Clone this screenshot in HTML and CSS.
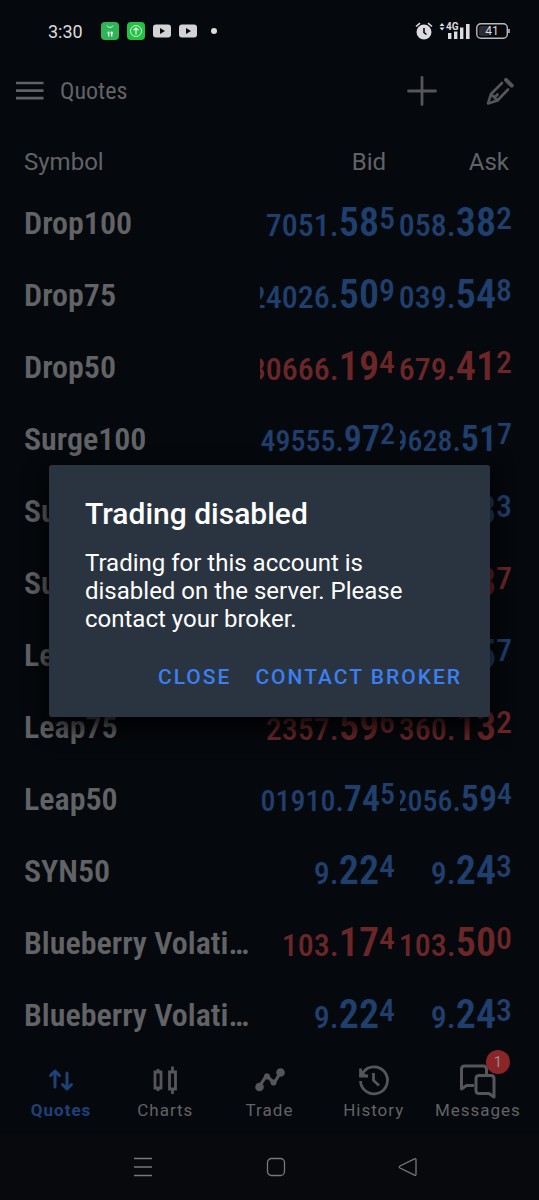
FILE: index.html
```html
<!DOCTYPE html>
<html lang="en">
<head>
<meta charset="utf-8">
<meta name="viewport" content="width=device-width, initial-scale=1">
<title>Quotes</title>
<link rel="stylesheet" href="styles.css">
</head>
<body>
<div class="app">
  <div class="status">
    <span class="clock">3:30</span>
    <div class="notices">
      <svg width="18" height="18" viewBox="0 0 18 18"><rect width="18" height="18" rx="4" fill="#2fb457"/><path d="M6 3.500a3.200 3 0 0 0 6 0" fill="none" stroke="#c9f5d2" stroke-width="1"/><path d="M7.700 9.500v5M10.700 9.500v5M6.500 11h2M9.500 11h2.500" stroke="#e6fbe9" stroke-width="1.300"/></svg>
      <svg width="18" height="18" viewBox="0 0 18 18"><rect width="18" height="18" rx="4" fill="#25c045"/><circle cx="9" cy="9" r="5.500" fill="none" stroke="#c9f5d2"/><path d="M9 12.500V6M6.500 8.300 9 5.800l2.500 2.500" fill="none" stroke="#e6fbe9" stroke-width="1.200"/></svg>
      <svg width="18" height="18" viewBox="0 0 18 18"><rect y="2.500" width="18" height="13" rx="3" fill="#d3d3d5"/><path d="M7 6v6l5-3z" fill="#08090c"/></svg>
      <svg width="18" height="18" viewBox="0 0 18 18"><rect y="2.500" width="18" height="13" rx="3" fill="#d3d3d5"/><path d="M7 6v6l5-3z" fill="#08090c"/></svg>
      <svg class="dot" width="6" height="6" viewBox="0 0 6 6"><circle cx="3" cy="3" r="3" fill="#dcdcde"/></svg>
    </div>
    <div class="system">
      <svg width="18" height="18" viewBox="0 0 18 18"><circle cx="9" cy="10" r="7.500" fill="#dcdcde"/><path d="M1 4.500 5 1.200M17 4.500l-4-3.300" stroke="#dcdcde" stroke-width="1.600"/><path d="M9 6v4.500l2.500 2" fill="none" stroke="#08090c" stroke-width="1.600"/></svg>
      <svg class="signal" width="31" height="18" viewBox="0 0 31 18" fill="#dcdcde"><path d="M.5 4 3 1l2.500 3zM.5 5.500 3 8.500l2.500-3zM9 11h3.400v6H9zM15 9.500h3.400V17H15zM21 5.500h3.400V17H21zM27 2h3.600v15H27z"/><text class="signal-text" x="7" y="8">4G</text></svg>
      <svg width="34" height="18" viewBox="0 0 34 18"><rect x=".8" y="1.800" width="30.500" height="14.500" rx="4" fill="none" stroke="#b9babc" stroke-width="1.400"/><rect x="3" y="4" width="10" height="10" rx="2" fill="#2a2c30"/><path d="M33 7v4" stroke="#b9babc" stroke-width="1.600"/><text class="battery-text" x="16" y="13" text-anchor="middle">41</text></svg>
    </div>
  </div>

  <header class="toolbar">
    <button class="icon-button" aria-label="Menu"><svg width="28" height="20" viewBox="0 0 28 20"><path d="M0 2h27.500M0 9.700h27.500M0 17.200h27.500" stroke="#626366" stroke-width="2.700"/></svg></button>
    <h1 class="title">Quotes</h1>
    <button class="icon-button add" aria-label="Add symbol"><svg width="30" height="30" viewBox="0 0 30 30"><path d="M15 1.500v27M1.500 15h27" stroke="#55565a" stroke-width="2.800" stroke-linecap="round"/></svg></button>
    <button class="icon-button" aria-label="Edit list"><svg width="28" height="28" viewBox="0 0 28 28" fill="none" stroke="#55565a" stroke-width="2.600" stroke-linejoin="round" stroke-linecap="round"><path d="M16 6 5 17 2 26.500l9.500-3L22 12.500M5 17l6.500 6.500M8.500 20.500l3-3"/><path d="m20 2.800 5.800 5.800" stroke-width="4"/></svg></button>
  </header>

  <table class="quotes">
    <thead>
      <tr><th class="col-symbol">Symbol</th><th class="col-bid">Bid</th><th class="col-ask">Ask</th></tr>
    </thead>
    <tbody>
      <tr><td class="name">Drop100</td><td><div class="price up">7051.<b>58</b><i>5</i></div></td><td><div class="price up">7058.<b>38</b><i>2</i></div></td></tr>
      <tr><td class="name">Drop75</td><td><div class="price up">24026.<b>50</b><i>9</i></div></td><td><div class="price up">24039.<b>54</b><i>8</i></div></td></tr>
      <tr><td class="name">Drop50</td><td><div class="price down">30666.<b>19</b><i>4</i></div></td><td><div class="price down">30679.<b>41</b><i>2</i></div></td></tr>
      <tr><td class="name">Surge100</td><td><div class="price up small">49555.<b>97</b><i>2</i></div></td><td><div class="price up small">49628.<b>51</b><i>7</i></div></td></tr>
      <tr><td class="name">Surge75</td><td><div class="price up"></div></td><td><div class="price up"><b>33</b><i>3</i></div></td></tr>
      <tr><td class="name">Surge50</td><td><div class="price down"></div></td><td><div class="price down"><b>33</b><i>7</i></div></td></tr>
      <tr><td class="name">Leap100</td><td><div class="price up"></div></td><td><div class="price up"><b>55</b><i>7</i></div></td></tr>
      <tr><td class="name">Leap75</td><td><div class="price down">2357.<b>59</b><i>6</i></div></td><td><div class="price down">2360.<b>13</b><i>2</i></div></td></tr>
      <tr><td class="name">Leap50</td><td><div class="price up small">301910.<b>74</b><i>5</i></div></td><td><div class="price up small">302056.<b>59</b><i>4</i></div></td></tr>
      <tr><td class="name">SYN50</td><td><div class="price up">9.<b>22</b><i>4</i></div></td><td><div class="price up">9.<b>24</b><i>3</i></div></td></tr>
      <tr><td class="name">Blueberry Volati…</td><td><div class="price down">103.<b>17</b><i>4</i></div></td><td><div class="price down">103.<b>50</b><i>0</i></div></td></tr>
      <tr><td class="name">Blueberry Volati…</td><td><div class="price up">9.<b>22</b><i>4</i></div></td><td><div class="price up">9.<b>24</b><i>3</i></div></td></tr>
    </tbody>
  </table>

  <nav class="tabs">
    <a class="tab active" href="#quotes"><svg width="36" height="36" viewBox="0 0 36 36" fill="none" stroke="#1d4178" stroke-width="3" stroke-linecap="round" stroke-linejoin="round"><path d="M12 25V9M7.500 13.500 12 9l4.500 4.500M24 11v16M19.500 22.500 24 27l4.500-4.500"/></svg>Quotes</a>
    <a class="tab" href="#charts"><svg width="36" height="36" viewBox="0 0 36 36" fill="none" stroke="#55565a" stroke-width="2.800"><path d="M8 10h6v16H8zM22.500 10h6v17h-6zM11 7v3M11 26v3M25.500 4.500V10M25.500 27v5"/></svg>Charts</a>
    <a class="tab" href="#trade"><svg width="36" height="36" viewBox="0 0 36 36"><path d="m7 25 7.500-11.500L22 21l7-11" fill="none" stroke="#55565a" stroke-width="3.200"/><g fill="#55565a"><circle cx="7.500" cy="25" r="4.300"/><circle cx="15" cy="14.500" r="3"/><circle cx="21.500" cy="20.500" r="3"/><circle cx="28.500" cy="10.500" r="4.300"/></g></svg>Trade</a>
    <a class="tab" href="#history"><svg width="36" height="36" viewBox="0 0 36 36" fill="none" stroke="#55565a" stroke-width="2.800"><path d="M4.500 19A13.500 13.500 0 1 0 7 10.500"/><path d="M4.500 6.500V14H12"/><path d="M5 13.500V8l5 5.500z" fill="#55565a" stroke-width="1"/><path d="M17.500 11v7.500l5.500 5"/></svg>History</a>
    <a class="tab" href="#messages"><span class="tab-icon"><svg width="40" height="36" viewBox="0 0 40 36" fill="none" stroke="#55565a" stroke-width="3" stroke-linejoin="round"><path d="M16 23.500H8.500L3.500 27V7q0-3 3-3h19q3 0 3 3v6"/><path d="M21 13.500h12q3 0 3 3V35l-5-3.500H21q-3 0-3-3v-12q0-3 3-3z"/></svg><span class="badge">1</span></span>Messages</a>
  </nav>

  <div class="system-nav">
    <button class="icon-button" aria-label="Recent apps"><svg width="20" height="20" viewBox="0 0 20 20"><path d="M1 1.500h18M1 10h18M1 18.500h18" stroke="#77787a" stroke-width="1.500"/></svg></button>
    <button class="icon-button" aria-label="Home"><svg width="20" height="20" viewBox="0 0 20 20"><rect x="1.500" y="1.500" width="17" height="17" rx="4" fill="none" stroke="#77787a" stroke-width="1.300"/></svg></button>
    <button class="icon-button" aria-label="Back"><svg width="20" height="20" viewBox="0 0 20 20"><path d="M16.500 1.800Q18 1 18 3v14q0 2-1.500 1.200L2 11q-1.500-1 0-2z" fill="none" stroke="#77787a" stroke-width="1.300"/></svg></button>
  </div>

  <div class="overlay">
    <section class="dialog" role="alertdialog" aria-labelledby="dialog-title" aria-describedby="dialog-text">
      <h2 class="dialog-title" id="dialog-title">Trading disabled</h2>
      <p class="dialog-text" id="dialog-text">Trading for this account is disabled on the server. Please contact your broker.</p>
      <div class="dialog-actions">
        <button class="dialog-button">CLOSE</button>
        <button class="dialog-button">CONTACT BROKER</button>
      </div>
    </section>
  </div>
</div>
</body>
</html>
```
FILE: styles.css
```css
* { box-sizing: border-box; }

body {
  margin: 0;
  background: #05080c;
  color: #626366;
  font-family: Roboto, "Liberation Sans", sans-serif;
}

button {
  margin: 0;
  padding: 0;
  border: 0;
  background: none;
  font-family: inherit;
}

svg {
  display: block;
  overflow: visible;
}

.app {
  position: relative;
  display: flex;
  flex-direction: column;
  min-height: 100vh;
}

.status {
  display: flex;
  align-items: center;
  height: 62px;
  padding: 0 29px 0 48px;
  color: #dcdcde;
}

.clock { font-size: 18px; }

.notices {
  display: flex;
  align-items: center;
  gap: 8px;
  margin-left: 18px;
}

.dot { margin-left: 6px; }

.system {
  display: flex;
  align-items: center;
  gap: 6px;
  margin-left: auto;
}

.signal-text {
  font-size: 10px;
  font-weight: 700;
}

.battery-text {
  fill: #dcdcde;
  font-size: 12px;
}

.toolbar {
  display: flex;
  align-items: center;
  height: 58px;
  padding: 0 25px 0 16px;
}

.title {
  margin: 0 0 0 16px;
  font-family: "Roboto Condensed", "Liberation Sans Narrow", Roboto, sans-serif;
  font-size: 24px;
  font-weight: 400;
}

.add { margin: 0 49px 0 auto; }

.quotes {
  width: 100%;
  padding: 0 27px 0 24px;
  border-spacing: 0;
  table-layout: fixed;
}

.quotes th {
  height: 67px;
  padding: 16px 0 0;
  font-size: 24px;
  font-weight: 400;
  text-align: right;
}

.quotes .col-symbol { text-align: left; }

.quotes .col-bid {
  width: 135px;
  padding-right: 9px;
}

.quotes .col-ask {
  width: 117px;
  padding-right: 3px;
}

.quotes td {
  height: 72px;
  padding: 0;
}

.quotes td:last-child { padding-left: 5px; }

.quotes .name {
  font-family: "Roboto Condensed", "Liberation Sans Narrow", Lato, sans-serif;
  font-size: 32px;
  font-weight: 600;
  white-space: nowrap;
}

.price {
  display: flex;
  align-items: baseline;
  justify-content: flex-end;
  height: 48px;
  overflow: hidden;
  font-family: "Roboto Condensed", "Liberation Sans Narrow", Lato, sans-serif;
  font-size: 32px;
  font-weight: 500;
  line-height: 48px;
}

.price b {
  font-size: 40px;
  font-weight: 600;
}

.price i {
  align-self: flex-start;
  font-style: normal;
  line-height: 38px;
}

.price.small { font-size: 30px; }
.small b { font-size: 36px; }

.up { color: #1f3f6d; }
.down { color: #6b2628; }

.tabs {
  display: flex;
  height: 83px;
  margin-top: auto;
  padding: 0 9px;
}

.tab {
  flex: 1 1 0;
  display: flex;
  flex-direction: column;
  align-items: center;
  padding-top: 11px;
  color: #626366;
  font-size: 17px;
  letter-spacing: 1px;
  line-height: 24px;
  text-decoration: none;
}

.active {
  color: #1d4178;
  font-weight: 700;
}

.tab-icon { position: relative; }

.badge {
  position: absolute;
  top: -12px;
  right: -12px;
  width: 24px;
  height: 24px;
  border-radius: 50%;
  background: #8c2528;
  color: #8f8f91;
  font-size: 14px;
  letter-spacing: 0;
  text-align: center;
}

.system-nav {
  display: flex;
  justify-content: space-between;
  align-items: center;
  height: 66px;
  padding: 0 121px 0 133px;
  background: #08090c;
}

.overlay {
  position: absolute;
  inset: 0;
  display: flex;
  align-items: center;
  justify-content: center;
  padding: 0 49px 18px;
}

.dialog {
  width: 100%;
  max-width: 560px;
  padding: 30px 28px 18px 36px;
  border-radius: 3px;
  background: #2a3441;
  box-shadow: 0 8px 24px #000000;
  color: #ffffff;
}

.dialog-title {
  margin: 0;
  font-size: 30px;
  font-weight: 500;
  line-height: 38px;
}

.dialog-text {
  margin: 16px 0 0;
  padding-right: 8px;
  font-size: 24px;
  line-height: 28px;
}

.dialog-actions {
  display: flex;
  justify-content: flex-end;
  gap: 24px;
  margin-top: 22px;
}

.dialog-button {
  height: 44px;
  color: #3b7ff0;
  font-size: 21px;
  font-weight: 500;
  letter-spacing: 2px;
}
```
